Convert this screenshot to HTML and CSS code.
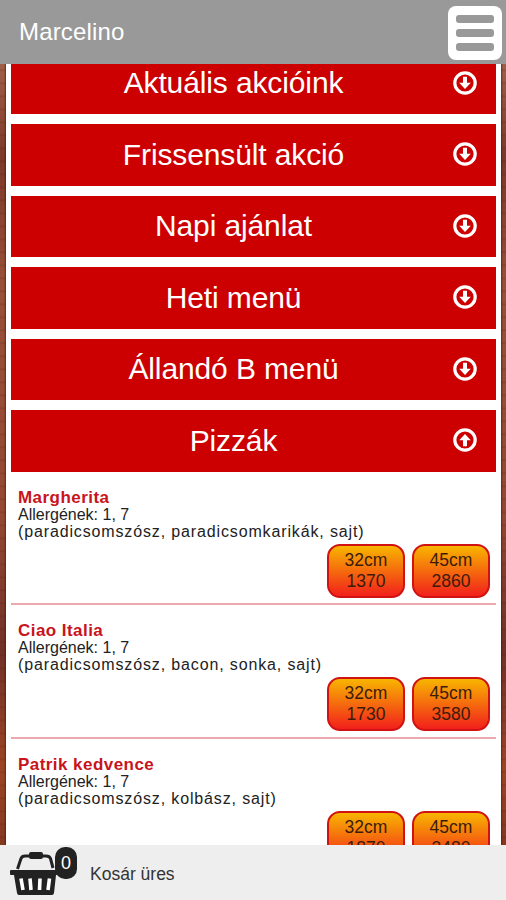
FILE: index.html
```html
<!DOCTYPE html>
<html lang="hu">
  <head>
    <meta charset="UTF-8" />
    <meta name="viewport" content="width=device-width, initial-scale=1.0" />
    <title>Marcelino</title>
    <link rel="stylesheet" href="styles.css">
  </head>

  <body>
    <svg class="sprite">
      <symbol id="arrow-down" viewBox="0 0 24 24">
        <circle cx="12" cy="12" r="10.2" fill="none" stroke="#fff" stroke-width="3.2" />
        <path d="M10 5.8h4v6h3.8L12 18l-5.8-6.2H10z" fill="#fff" />
      </symbol>
      <symbol id="arrow-up" viewBox="0 0 24 24">
        <circle cx="12" cy="12" r="10.2" fill="none" stroke="#fff" stroke-width="3.2" />
        <path d="M10 18.2h4v-6h3.8L12 6l-5.8 6.2H10z" fill="#fff" />
      </symbol>
    </svg>

    <header class="topbar">
      <h1>Marcelino</h1>
      <button class="menu-button" aria-label="Menü">
        <span></span>
        <span></span>
        <span></span>
      </button>
    </header>

    <main class="content">
      <div class="panel">
        <div class="category"><h2>Aktuális akcióink</h2><svg class="arrow"><use href="#arrow-down" /></svg></div>
        <div class="category"><h2>Frissensült akció</h2><svg class="arrow"><use href="#arrow-down" /></svg></div>
        <div class="category"><h2>Napi ajánlat</h2><svg class="arrow"><use href="#arrow-down" /></svg></div>
        <div class="category"><h2>Heti menü</h2><svg class="arrow"><use href="#arrow-down" /></svg></div>
        <div class="category"><h2>Állandó B menü</h2><svg class="arrow"><use href="#arrow-down" /></svg></div>
        <div class="category"><h2>Pizzák</h2><svg class="arrow"><use href="#arrow-up" /></svg></div>

        <div class="item">
          <h3 class="name">Margherita</h3>
          <p class="allergens">Allergének: 1, 7</p>
          <p class="toppings">(paradicsomszósz, paradicsomkarikák, sajt)</p>
          <div class="prices">
            <button class="price">32cm<br />1370</button>
            <button class="price">45cm<br />2860</button>
          </div>
        </div>
        <div class="item">
          <h3 class="name">Ciao Italia</h3>
          <p class="allergens">Allergének: 1, 7</p>
          <p class="toppings">(paradicsomszósz, bacon, sonka, sajt)</p>
          <div class="prices">
            <button class="price">32cm<br />1730</button>
            <button class="price">45cm<br />3580</button>
          </div>
        </div>
        <div class="item">
          <h3 class="name">Patrik kedvence</h3>
          <p class="allergens">Allergének: 1, 7</p>
          <p class="toppings">(paradicsomszósz, kolbász, sajt)</p>
          <div class="prices">
            <button class="price">32cm<br />1870</button>
            <button class="price">45cm<br />3480</button>
          </div>
        </div>
      </div>
    </main>

    <footer class="cart">
      <div class="basket">
        <svg width="48" height="46" viewBox="0 0 48 46">
          <path d="M7.500 19L11 8.500Q12 6 15 6H36Q39.500 6 40.500 8.500L43 18" fill="none" stroke="#222" stroke-width="3" />
          <rect x="19" y="2" width="14" height="7" rx="2" fill="#222" />
          <path d="M0 21Q0 20 1 20H47V25H46L44 43Q43.600 45 42 45H9Q7.300 45 7 43L4 25H1Q0 25 0 24z" fill="#222" />
          <path d="M11 28.500L13 40M20 28.500L21 40M30 28.500L29.500 40M39.500 28.500L38 40" stroke="#fff" stroke-width="3.6" />
        </svg>
        <span class="badge">0</span>
      </div>
      <span class="cart-text">Kosár üres</span>
    </footer>
  </body>
</html>
```
FILE: styles.css
```css
* {
  margin: 0;
  padding: 0;
  box-sizing: border-box;
}

body {
  font-family: "Liberation Sans", Arial, sans-serif;
  display: flex;
  flex-direction: column;
  height: 100vh;
  overflow: hidden;
  color: #222;
}

.sprite {
  display: none;
}

.topbar {
  flex: 0 0 64px;
  display: flex;
  justify-content: space-between;
  align-items: center;
  padding: 1px 4px 0 19px;
  background-color: #999;
}

.topbar h1 {
  color: #fff;
  font-size: 24px;
  font-weight: normal;
  line-height: 28px;
  letter-spacing: 0.15px;
  margin-bottom: 2px;
}

.menu-button {
  display: flex;
  flex-direction: column;
  justify-content: center;
  gap: 6px;
  width: 54px;
  height: 54px;
  padding: 0 8px;
  border: none;
  border-radius: 8px;
  background-color: #fff;
}

.menu-button span {
  height: 8px;
  border-radius: 3px;
  background-color: #999;
}

/* wood strips on both sides of the panel */
.content {
  flex: 1;
  min-height: 0;
  overflow: hidden;
  padding: 0 5px 0 6px;
  background-color: #95482f;
  background-image:
    linear-gradient(to right, transparent 4px, rgba(80, 15, 0, 0.6) 6px, transparent 7px, transparent 500px, rgba(80, 15, 0, 0.6) 501px, transparent 503px),
    repeating-linear-gradient(transparent 0, transparent 5px, rgba(60, 20, 10, 0.18) 6px, transparent 8px, transparent 13px),
    linear-gradient(#a06048, #7c3829 12%, #985038 28%, #944832 58%, #713028 75%, #9c4525 90%, #843820);
}

.panel {
  margin-top: -11.5px;
  padding: 0 5px;
  background-color: #fff;
}

.category {
  display: flex;
  align-items: center;
  height: 61.5px;
  margin-bottom: 10px;
  padding: 0 19px 0 22px;
  background-color: #c00;
  color: #fff;
}

.category:nth-child(6) {
  margin-bottom: 0;
}

.category h2 {
  flex: 1;
  padding-right: 19px;
  font-size: 30px;
  font-weight: normal;
  line-height: 34px;
  letter-spacing: -0.12px;
  text-align: center;
}

.arrow {
  width: 24px;
  height: 24px;
  margin-bottom: 1px;
}

.item {
  height: 133.5px;
  padding: 17px 6px 0 7px;
  border-bottom: 2px solid #eda9af;
}

.name {
  color: #c8141c;
  font-size: 17px;
  line-height: 18px;
  letter-spacing: 0.45px;
}

.allergens {
  font-size: 16px;
  line-height: 16px;
}

.toppings {
  font-size: 16px;
  line-height: 18px;
  letter-spacing: 0.86px;
}

.prices {
  display: flex;
  justify-content: flex-end;
  gap: 7px;
  margin-top: 3px;
}

.price {
  width: 78px;
  height: 54px;
  border: 2px solid #d01212;
  border-radius: 13px;
  background: linear-gradient(#f8b500, #f2201c);
  color: #3c1c08;
  font-family: inherit;
  font-size: 17.5px;
  line-height: 21px;
}

.cart {
  flex: 0 0 55px;
  display: flex;
  align-items: center;
  padding-left: 10px;
  background-color: #eee;
}

.basket {
  position: relative;
  width: 80px;
  height: 46px;
}

.badge {
  position: absolute;
  top: -3px;
  left: 45px;
  width: 22px;
  height: 32px;
  border-radius: 10px;
  background-color: #222;
  color: #fff;
  font-size: 18px;
  line-height: 33px;
  text-align: center;
}

.cart-text {
  margin-top: 4px;
  font-size: 17.5px;
  color: #333;
}
```
